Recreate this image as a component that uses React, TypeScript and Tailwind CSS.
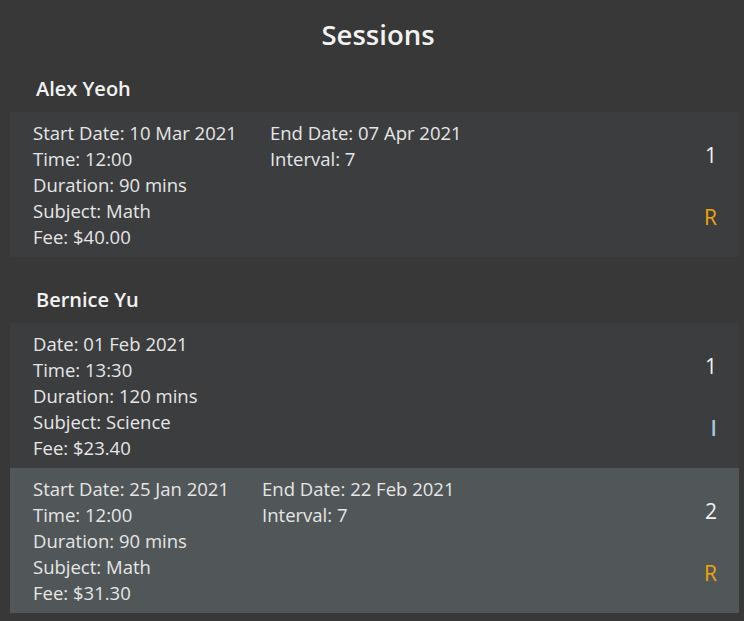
import React from "react";

type Session = {
  id: number;
  recurring: boolean;
  date: string;
  endDate?: string;
  interval?: number;
  time: string;
  duration: number;
  subject: string;
  fee: string;
  selected?: boolean;
};

type Group = { name: string; sessions: Session[] };

const groups: Group[] = [
  {
    name: "Alex Yeoh",
    sessions: [
      {
        id: 1,
        recurring: true,
        date: "10 Mar 2021",
        endDate: "07 Apr 2021",
        interval: 7,
        time: "12:00",
        duration: 90,
        subject: "Math",
        fee: "$40.00",
      },
    ],
  },
  {
    name: "Bernice Yu",
    sessions: [
      {
        id: 1,
        recurring: false,
        date: "01 Feb 2021",
        time: "13:30",
        duration: 120,
        subject: "Science",
        fee: "$23.40",
      },
      {
        id: 2,
        recurring: true,
        date: "25 Jan 2021",
        endDate: "22 Feb 2021",
        interval: 7,
        time: "12:00",
        duration: 90,
        subject: "Math",
        fee: "$31.30",
        selected: true,
      },
    ],
  },
];

const SessionCard = ({ s }: { s: Session }) => (
  <div
    className={`flex h-[145px] pl-[23px] pr-[22px] pt-[8px] ${
      s.selected ? "bg-[#515658]" : "bg-[#3c3d3f]"
    }`}
  >
    <div className="flex gap-[33px] flex-1 text-[18.5px] leading-[26px] text-[#e6e6e6]">
      <div>
        <div>{s.recurring ? "Start Date" : "Date"}: {s.date}</div>
        <div>Time: {s.time}</div>
        <div>Duration: {s.duration} mins</div>
        <div>Subject: {s.subject}</div>
        <div>Fee: {s.fee}</div>
      </div>
      {s.recurring && (
        <div>
          <div>End Date: {s.endDate}</div>
          <div>Interval: {s.interval}</div>
        </div>
      )}
    </div>
    <div className="flex flex-col items-end pt-[22px] text-[21px] leading-[26px]">
      <div className="text-[#f2f2f2]">{s.id}</div>
      <div
        className={`mt-[36px] ${
          s.recurring ? "text-[#f0a30a]" : "text-[#a7c8d6] font-semibold"
        }`}
      >
        {s.recurring ? "R" : "I"}
      </div>
    </div>
  </div>
);

export default function App() {
  return (
    <div
      className="min-h-[621px] bg-[#383838] pl-[10px] pr-[5px]"
      style={{ fontFamily: '"Segoe UI", "Open Sans", "Noto Sans", sans-serif' }}
    >
      <div className="h-[66px] flex items-center justify-center pt-[4px] pl-[7px] text-[27.5px] font-semibold text-[#f2f2f2]">
        Sessions
      </div>
      {groups.map((g, i) => (
        <div key={g.name} className={i > 0 ? "mt-[20px]" : ""}>
          <div className="h-[46px] flex items-center pl-[26px] text-[20px] font-semibold text-[#f2f2f2]">
            {g.name}
          </div>
          {g.sessions.map((s) => (
            <SessionCard key={s.id + s.date} s={s} />
          ))}
        </div>
      ))}
    </div>
  );
}
